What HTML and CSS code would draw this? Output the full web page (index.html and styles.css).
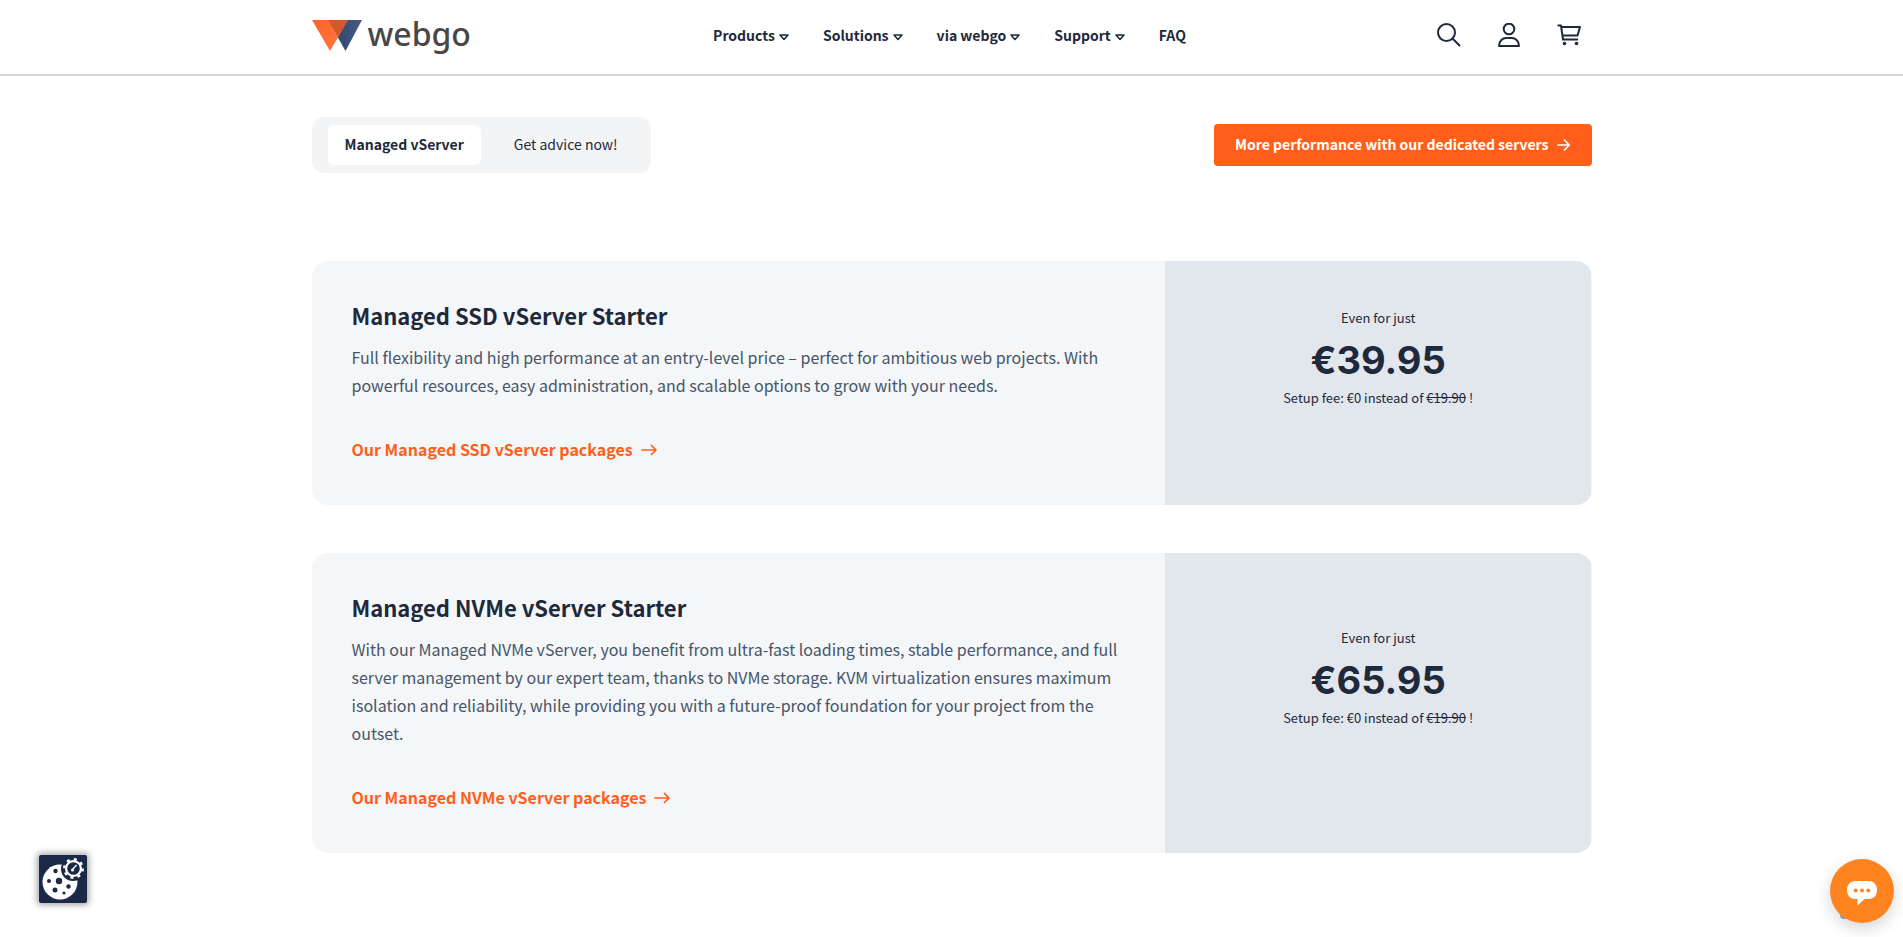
FILE: index.html
```html
<!DOCTYPE html>
<html lang="en">
  <head>
    <meta charset="utf-8">
    <title>Managed vServer | webgo</title>
    <meta name="viewport" content="width=device-width, initial-scale=1">
    <link rel="stylesheet" href="styles.css">
  </head>
<body>

	<header class="site-header">
		<div class="container header-inner">
			<a href="#" class="logo">
				<svg class="logo-mark" width="50" height="31" viewBox="0 0 50 31" aria-hidden="true">
					<defs>
						<linearGradient id="orange" x1="0" y1="0" x2="1" y2="1">
							<stop offset="0" stop-color="#fb6425"/>
							<stop offset="1" stop-color="#ff7a45"/>
						</linearGradient>
						<linearGradient id="blue" x1="0" y1="0" x2="1" y2="0">
							<stop offset="0" stop-color="#2c4168"/>
							<stop offset="1" stop-color="#455c88"/>
						</linearGradient>
					</defs>
					<path d="M16 0H50L33.500 31Z" fill="url(#blue)"/>
					<path d="M0 0H36L18 31Z" fill="url(#orange)"/>
					<path d="M16 0H36L26 17Z" fill="#cf5a2b"/>
				</svg>
				<span class="logo-text">webgo</span>
			</a>
			<nav class="main-nav">
				<a href="#">Products <svg class="caret" width="10" height="8" viewBox="0 0 10 8"><path d="M1 2h8L5 6.500Z"/></svg></a>
				<a href="#">Solutions <svg class="caret" width="10" height="8" viewBox="0 0 10 8"><path d="M1 2h8L5 6.500Z"/></svg></a>
				<a href="#">via webgo <svg class="caret" width="10" height="8" viewBox="0 0 10 8"><path d="M1 2h8L5 6.500Z"/></svg></a>
				<a href="#">Support <svg class="caret" width="10" height="8" viewBox="0 0 10 8"><path d="M1 2h8L5 6.500Z"/></svg></a>
				<a href="#">FAQ</a>
			</nav>
			<div class="header-icons">
				<button type="button" aria-label="Search">
					<svg width="24" height="24" viewBox="0 0 24 24"><circle cx="9.500" cy="9.500" r="8.500"/><path d="M15.500 15.500L23 23"/></svg>
				</button>
				<button type="button" aria-label="Account">
					<svg width="24" height="24" viewBox="0 0 24 24"><circle cx="12" cy="6" r="5.300"/><path d="M2 23C2 17.500 6 15 9 15h6c3 0 7 2.500 7 8Z"/></svg>
				</button>
				<button type="button" aria-label="Cart">
					<svg width="24" height="24" viewBox="0 0 24 24"><path d="M.5 2.500H4L6 16.500H21M4.500 4H23L20.500 12.500H5.500"/><circle class="dot" cx="7.500" cy="20.500" r="1.800"/><circle class="dot" cx="19.500" cy="20.500" r="1.800"/></svg>
				</button>
			</div>
		</div>
	</header>

	<main class="container">
		<div class="toolbar">
			<div class="tabs">
				<button type="button" class="tab active">Managed vServer</button>
				<button type="button" class="tab">Get advice now!</button>
			</div>
			<a href="#" class="btn">More performance with our dedicated servers
				<svg class="arrow" width="12" height="12" viewBox="0 0 12 12"><path d="M0 6h11M6.500 1L11.200 6L6.500 11"/></svg>
			</a>
		</div>

		<section class="card">
			<div class="card-body">
				<h2>Managed SSD vServer Starter</h2>
				<p>Full flexibility and high performance at an entry-level price – perfect for ambitious web projects. With powerful resources, easy administration, and scalable options to grow with your needs.</p>
				<a href="#" class="card-link">Our Managed SSD vServer packages
					<svg class="arrow" width="15" height="12" viewBox="0 0 15 12"><path d="M0 6h14M9.500 1.500L14 6L9.500 10.500"/></svg>
				</a>
			</div>
			<div class="card-price">
				<span>Even for just</span>
				<strong>€39.95</strong>
				<span>Setup fee: €0 instead of <s>€19.90</s> !</span>
			</div>
		</section>

		<section class="card">
			<div class="card-body">
				<h2>Managed NVMe vServer Starter</h2>
				<p>With our Managed NVMe vServer, you benefit from ultra-fast loading times, stable performance, and full server management by our expert team, thanks to NVMe storage. KVM virtualization ensures maximum isolation and reliability, while providing you with a future-proof foundation for your project from the outset.</p>
				<a href="#" class="card-link">Our Managed NVMe vServer packages
					<svg class="arrow" width="15" height="12" viewBox="0 0 15 12"><path d="M0 6h14M9.500 1.500L14 6L9.500 10.500"/></svg>
				</a>
			</div>
			<div class="card-price">
				<span>Even for just</span>
				<strong>€65.95</strong>
				<span>Setup fee: €0 instead of <s>€19.90</s> !</span>
			</div>
		</section>
	</main>

	<!-- floating buttons -->
	<button type="button" class="cookie-btn" aria-label="Cookie settings">
		<svg width="48" height="48" viewBox="0 0 48 48">
			<circle cx="21" cy="27" r="17.500" fill="#fff"/>
			<g fill="#1a2947">
				<circle cx="34" cy="14" r="12"/>
				<circle cx="16.500" cy="16" r="2.200"/>
				<circle cx="10" cy="26" r="2"/>
				<circle cx="20" cy="26" r="3.200"/>
				<circle cx="29.500" cy="31.500" r="2.200"/>
				<circle cx="16" cy="35" r="2.500"/>
				<circle cx="25" cy="38" r="1.600"/>
			</g>
			<circle cx="34.500" cy="13.500" r="9.200" fill="none" stroke="#fff" stroke-width="2.500" stroke-dasharray="3 4.225"/>
			<circle cx="34.500" cy="13.500" r="7.400" fill="none" stroke="#fff" stroke-width="2.200"/>
			<path d="M33.500 14.500L37.500 10" stroke="#fff" stroke-width="1.300"/>
			<circle cx="33.500" cy="15" r="1.500" fill="#fff"/>
		</svg>
	</button>
	<button type="button" class="chat-btn" aria-label="Open chat">
		<svg width="32" height="26" viewBox="0 0 32 26">
			<path d="M9 1H23C28 1 31 5 31 10S28 19 23 19H18.500L11.500 25.500V19H9C4 19 1 15 1 10S4 1 9 1Z" fill="#fff"/>
			<g fill="#ff8420"><circle cx="9.700" cy="10.500" r="2"/><circle cx="16" cy="10.500" r="2"/><circle cx="22.300" cy="10.500" r="2"/></g>
		</svg>
	</button>

</body>
</html>
```
FILE: styles.css
```css
* {
    padding: 0;
    margin: 0;
    box-sizing: border-box;
}
body {
    font-family: "Noto Sans CJK SC", "Noto Sans", sans-serif;
    font-size: 14px;
    line-height: 24px;
    color: #1e293b;
    background: #fff;
}
a {
    color: inherit;
    text-decoration: none;
}
button {
    font: inherit;
    color: inherit;
    border: 0;
    background: none;
    cursor: pointer;
}
svg {
    display: block;
}
.container {
    max-width: 1280px;
    margin: 0 auto;
}

/* header */
.site-header {
    border-bottom: 2px solid #d4d4d8;
}
.header-inner {
    display: grid;
    grid-template-columns: 1fr auto 1fr;
    align-items: center;
    height: 74px;
    padding-bottom: 4px;
}
.logo {
    display: flex;
    align-items: center;
    gap: 6px;
}
.logo-text {
    font-family: "Noto Sans", sans-serif;
    font-size: 32px;
    font-weight: 500;
    line-height: 44px;
    padding-bottom: 2px;
    color: #474747;
}
.main-nav {
    display: flex;
    gap: 34px;
    padding-right: 4px;
    font-weight: 700;
}
.main-nav a {
    display: flex;
    align-items: center;
    gap: 4px;
}
.caret {
    margin-top: 4px;
    fill: none;
    stroke: #1e293b;
    stroke-width: 1.5;
    stroke-linejoin: round;
}
.header-icons {
    display: flex;
    justify-content: flex-end;
    gap: 36px;
    padding-right: 11px;
}
.header-icons svg {
    fill: none;
    stroke: #1e293b;
    stroke-width: 2;
    stroke-linejoin: round;
}
.header-icons .dot {
    fill: #1e293b;
    stroke: none;
}

/* tabs and button */
.toolbar {
    display: flex;
    align-items: center;
    justify-content: space-between;
    padding: 41px 0 88px;
}
.tabs {
    display: flex;
    gap: 16px;
    padding: 8px 16px;
    border-radius: 12px;
    background: #f3f4f6;
}
.tab {
    padding: 7px 17px 9px;
    border-radius: 6px;
}
.tab.active {
    font-weight: 700;
    background: #fff;
}
.btn {
    display: flex;
    align-items: center;
    gap: 9px;
    padding: 8px 22px 10px 21px;
    border-radius: 4px;
    font-weight: 700;
    color: #fff;
    background: #ff5f1a;
}
.arrow {
    margin-top: 2px;
    fill: none;
    stroke: currentColor;
    stroke-width: 1.7;
    stroke-linecap: round;
    stroke-linejoin: round;
    overflow: visible;
}

/* cards */
.card {
    display: grid;
    grid-template-columns: 2fr 1fr;
    margin-bottom: 48px;
    border-radius: 16px;
    overflow: hidden;
    background: #f4f6f8;
}
.card-body {
    padding: 38px 40px 42px;
}
.card h2 {
    font-size: 22px;
    line-height: 32px;
}
.card p {
    margin: 12px 0 36px;
    font-size: 16px;
    line-height: 28px;
    color: #475569;
}
.card-link {
    display: flex;
    align-items: center;
    gap: 9px;
    font-size: 16px;
    line-height: 28px;
    font-weight: 700;
    color: #ff5f1a;
}
.card-price {
    display: flex;
    flex-direction: column;
    align-items: center;
    justify-content: center;
    padding-bottom: 50px;
    font-size: 13px;
    background: #e2e6ed;
}
.card-price strong {
    padding-top: 4px;
    font-family: Inter, sans-serif;
    font-size: 38px;
    line-height: 52px;
}

/* floating buttons */
.cookie-btn {
    position: fixed;
    left: 39px;
    bottom: 34px;
    border-radius: 2px;
    background: #1a2947;
    box-shadow: 0 0 6px 2px rgba(0, 0, 0, .35);
}
/* the first shadow is the small dot that peeks out at the lower left */
.chat-btn {
    position: fixed;
    right: 9px;
    bottom: 14px;
    display: flex;
    align-items: center;
    justify-content: center;
    width: 64px;
    height: 64px;
    padding-top: 4px;
    border-radius: 50%;
    background: #ff8420;
    box-shadow: -18px 24px 0 -28px #8496b4, 0 6px 16px rgba(0, 0, 0, .16);
}
```
